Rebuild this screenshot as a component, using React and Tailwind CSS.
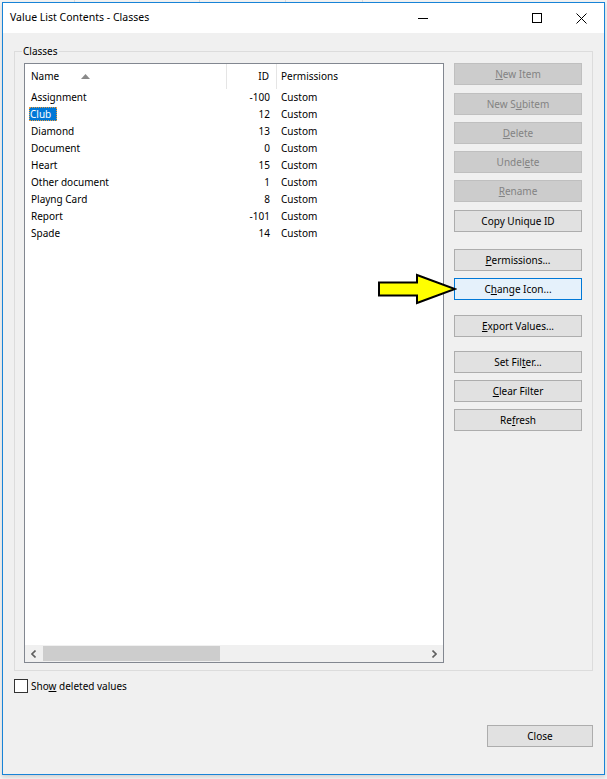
import React from 'react';

const rows = [
  ['Assignment', '-100'],
  ['Club', '12'],
  ['Diamond', '13'],
  ['Document', '0'],
  ['Heart', '15'],
  ['Other document', '1'],
  ['Playng Card', '8'],
  ['Report', '-101'],
  ['Spade', '14'],
];

function U({ children }) {
  return <span className="underline underline-offset-[1px]">{children}</span>;
}

function Btn({ children, disabled, focused, className = '' }) {
  let look = 'bg-[#e1e1e1] border-[#adadad] text-black';
  if (disabled) look = 'bg-[#cccccc] border-[#bfbfbf] text-[#838383]';
  if (focused) look = 'bg-[#e5f1fb] border-[#0078d7] text-black';
  return (
    <div className={`h-[22px] border flex items-center justify-center leading-none ${look} ${className}`}>
      {children}
    </div>
  );
}

export default function App() {
  return (
    <div className="relative w-[607px] h-[779px] bg-[#f3f3f3] overflow-hidden font-['Noto_Sans',sans-serif] text-[10px] text-black">
      {/* strip of the app behind */}
      <div className="flex h-[2px]">
        <div className="w-[75px] border-r border-[#d9d9d9]" />
        <div className="w-[125px] border-r border-[#d9d9d9]" />
        <div className="w-[86px] border-r border-[#d9d9d9]" />
        <div className="w-[77px] border-r border-[#d9d9d9]" />
      </div>

      <div className="ml-[2px] w-[603px] h-[773px] border border-[#1883d7] flex flex-col shadow-[0_2px_4px_rgba(0,0,0,0.15)]">
        {/* title bar */}
        <div className="h-[30px] bg-white flex items-center">
          <span className="ml-[7px] text-[10.5px]">Value List Contents - Classes</span>
          <div className="ml-auto flex items-center h-full">
            <div className="w-[38px] h-full flex items-center justify-center">
              <svg width="10" height="10" viewBox="0 0 10 10"><line x1="0" y1="5.5" x2="10" y2="5.5" stroke="#000" strokeWidth="1" /></svg>
            </div>
            <div className="w-[74px]" />
            <div className="w-[42px] h-full flex items-center justify-center">
              <svg width="10" height="10" viewBox="0 0 10 10"><rect x="0.5" y="0.5" width="9" height="9" fill="none" stroke="#000" strokeWidth="1" /></svg>
            </div>
            <div className="w-[46px] h-full flex items-center justify-center">
              <svg width="11" height="11" viewBox="0 0 11 11"><path d="M0.5 0.5 L10.5 10.5 M10.5 0.5 L0.5 10.5" stroke="#000" strokeWidth="1" /></svg>
            </div>
          </div>
        </div>

        {/* client area */}
        <div className="flex-1 bg-[#f0f0f0] pl-[11px] pt-[18px] flex flex-col">
          <div className="relative w-[579px] h-[620px] border border-[#dcdcdc] pl-[9px] pt-[11px] flex">
            <span className="absolute -top-[8px] left-[7px] bg-[#f0f0f0] px-[1px] leading-[14px]">Classes</span>

            {/* list view */}
            <div className="w-[420px] h-[600px] border border-[#828790] bg-white flex flex-col">
              <div className="h-[25px] flex items-center shrink-0">
                <div className="w-[202px] h-full border-r border-[#e5e5e5] flex items-center pl-[6px]">
                  <span>Name</span>
                  <svg className="ml-[22px]" width="9" height="5" viewBox="0 0 9 5"><polygon points="0,5 4.5,0 9,5" fill="#8a8a8a" /></svg>
                </div>
                <div className="w-[50px] h-full border-r border-[#e5e5e5] flex items-center justify-end pr-[7px]">ID</div>
                <div className="pl-[4px]">Permissions</div>
              </div>
              <div className="flex-1 flex flex-col">
                {rows.map(([name, id], i) => (
                  <div key={name} className="h-[17px] flex items-center">
                    <div className="w-[202px] pl-[6px]">
                      {i === 1 ? (
                        <span className="-ml-[2px] pl-[1px] pr-[6px] bg-[#0078d7] text-white outline outline-dotted outline-[#e89a3c] outline-offset-[-1px]">{name}</span>
                      ) : (
                        name
                      )}
                    </div>
                    <div className="w-[50px] text-right pr-[7px]">{id}</div>
                    <div className="pl-[4px]">Custom</div>
                  </div>
                ))}
              </div>
              {/* horizontal scrollbar */}
              <div className="h-[17px] bg-[#f0f0f0] flex items-center shrink-0">
                <div className="w-[17px] h-full flex items-center justify-center">
                  <svg width="5" height="8" viewBox="0 0 5 8"><polyline points="4.5,0.5 1,4 4.5,7.5" fill="none" stroke="#606060" strokeWidth="1.6" /></svg>
                </div>
                <div className="ml-[1px] w-[177px] h-[15px] bg-[#cdcdcd]" />
                <div className="ml-auto w-[17px] h-full flex items-center justify-center">
                  <svg width="5" height="8" viewBox="0 0 5 8"><polyline points="0.5,0.5 4,4 0.5,7.5" fill="none" stroke="#606060" strokeWidth="1.6" /></svg>
                </div>
              </div>
            </div>

            {/* buttons */}
            <div className="ml-[10px] w-[128px] flex flex-col">
              <Btn disabled><span><U>N</U>ew Item</span></Btn>
              <Btn disabled className="mt-[8px]"><span>New S<U>u</U>bitem</span></Btn>
              <Btn disabled className="mt-[7px]"><span><U>D</U>elete</span></Btn>
              <Btn disabled className="mt-[7px]"><span>Undel<U>e</U>te</span></Btn>
              <Btn disabled className="mt-[7px]"><span><U>R</U>ename</span></Btn>
              <Btn className="mt-[8px]"><span>Copy Unique ID</span></Btn>
              <Btn className="mt-[17px]"><span><U>P</U>ermissions...</span></Btn>
              <Btn focused className="mt-[7px]"><span>C<U>h</U>ange Icon...</span></Btn>
              <Btn className="mt-[15px]"><span><U>E</U>xport Values...</span></Btn>
              <Btn className="mt-[14px]"><span>Set Fil<U>t</U>er...</span></Btn>
              <Btn className="mt-[7px]"><span><U>C</U>lear Filter</span></Btn>
              <Btn className="mt-[7px]"><span>Re<U>f</U>resh</span></Btn>
            </div>
          </div>

          {/* checkbox */}
          <div className="mt-[8px] flex items-center h-[14px]">
            <div className="w-[14px] h-[14px] border border-[#333333] bg-white" />
            <span className="ml-[3px]">Sho<U>w</U> deleted values</span>
          </div>

          {/* close */}
          <div className="w-[579px] mt-[32px] flex justify-end">
            <Btn className="w-[106px]"><span>Close</span></Btn>
          </div>
        </div>
      </div>

      {/* callout arrow */}
      <svg className="absolute left-[377px] top-[273px]" width="80" height="32" viewBox="377 273 80 32">
        <polygon points="379,282.5 417,282.5 417,275 455,289 417,303 417,295.5 379,295.5" fill="#ffff00" stroke="#000" strokeWidth="2" strokeLinejoin="miter" />
      </svg>
    </div>
  );
}
